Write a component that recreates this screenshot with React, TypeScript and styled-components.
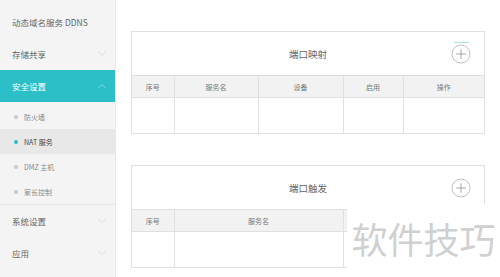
import styled, { createGlobalStyle } from 'styled-components'

const GlobalStyle = createGlobalStyle`
  html, body {
    margin: 0;
    padding: 0;
    background: #ffffff;
    font-family: "Noto Sans CJK SC", "Noto Sans", sans-serif;
  }
`

const Chevron = ({ up, light }: { up?: boolean; light?: boolean }) => (
  <ChevronSvg width="10" height="6" viewBox="0 0 10 6">
    <path
      d={up ? 'M1 5.5 L5 1.5 L9 5.5' : 'M1 0.5 L5 4.5 L9 0.5'}
      fill="none"
      stroke={light ? 'rgba(255,255,255,0.5)' : '#d4d4d4'}
      strokeWidth="0.8"
    />
  </ChevronSvg>
)

const PlusButton = ({ hint }: { hint?: boolean }) => (
  <PlusWrap>
    {hint && <Hint />}
    <svg width="20" height="20" viewBox="0 0 20 20">
      <circle cx="10" cy="10" r="9" fill="#fff" stroke="#b0b0b0" strokeWidth="0.8" />
      <path d="M10 5.2 V14.8 M5.2 10 H14.8" stroke="#909090" strokeWidth="0.8" />
    </svg>
  </PlusWrap>
)

const subItems = [
  { label: '防火墙' },
  { label: 'NAT 服务', active: true },
  { label: 'DMZ 主机' },
  { label: '家长控制' },
]

function App() {
  return (
    <>
      <GlobalStyle />
      <Page>
        <Sidebar>
          <MenuItem $first>
            <span>动态域名服务 DDNS</span>
          </MenuItem>
          <MenuItem>
            <span>存储共享</span>
            <Chevron />
          </MenuItem>
          <MenuItem $active>
            <span>安全设置</span>
            <Chevron up light />
          </MenuItem>
          <SubList>
            {subItems.map((s) => (
              <SubItem key={s.label} $active={s.active}>
                <Dot $active={s.active} />
                {s.label}
              </SubItem>
            ))}
          </SubList>
          <MenuItem>
            <span>系统设置</span>
            <Chevron />
          </MenuItem>
          <MenuItem>
            <span>应用</span>
            <Chevron />
          </MenuItem>
        </Sidebar>

        <Main>
          <Panel>
            <PanelHeader>
              <PanelTitle>端口映射</PanelTitle>
              <PlusButton hint />
            </PanelHeader>
            <Table>
              <colgroup>
                <col style={{ width: 42 }} />
                <col style={{ width: 84 }} />
                <col style={{ width: 85 }} />
                <col style={{ width: 60 }} />
                <col />
              </colgroup>
              <thead>
                <tr>
                  <Th>序号</Th>
                  <Th>服务名</Th>
                  <Th>设备</Th>
                  <Th>启用</Th>
                  <Th>操作</Th>
                </tr>
              </thead>
              <tbody>
                <tr>
                  <Td />
                  <Td />
                  <Td />
                  <Td />
                  <Td />
                </tr>
              </tbody>
            </Table>
          </Panel>

          <Panel>
            <PanelHeader>
              <PanelTitle>端口触发</PanelTitle>
              <PlusButton />
            </PanelHeader>
            <Table>
              <colgroup>
                <col style={{ width: 42 }} />
                <col style={{ width: 169 }} />
                <col style={{ width: 80 }} />
                <col />
              </colgroup>
              <thead>
                <tr>
                  <Th>序号</Th>
                  <Th>服务名</Th>
                  <Th />
                  <Th />
                </tr>
              </thead>
              <tbody>
                <tr>
                  <Td />
                  <Td />
                  <Td />
                  <Td />
                </tr>
              </tbody>
            </Table>
          </Panel>
        </Main>

        <Watermark>软件技巧</Watermark>
      </Page>
    </>
  )
}

export default App

const Page = styled.div`
  position: relative;
  display: flex;
  width: 500px;
  height: 277px;
  overflow: hidden;
`

const Sidebar = styled.nav`
  width: 116px;
  flex-shrink: 0;
  background: #f4f4f4;
  border-right: 1px solid #e8e8e8;
  box-sizing: border-box;
  display: flex;
  flex-direction: column;
`

const MenuItem = styled.div<{ $active?: boolean; $first?: boolean }>`
  height: 32px;
  margin-top: ${(p) => (p.$first ? '6px' : '0')};
  padding: 0 8px 0 12px;
  display: flex;
  align-items: center;
  justify-content: space-between;
  font-size: 8.5px;
  color: ${(p) => (p.$active ? '#ffffff' : '#666666')};
  background: ${(p) => (p.$active ? '#2dbfc8' : 'transparent')};
`

const ChevronSvg = styled.svg`
  display: block;
`

const SubList = styled.div`
  padding: 2px 0 0;
  border-bottom: 1px solid #e4e4e4;
`

const SubItem = styled.div<{ $active?: boolean }>`
  height: 25px;
  display: flex;
  align-items: center;
  padding-left: 14px;
  font-size: 7px;
  color: ${(p) => (p.$active ? '#444444' : '#888888')};
  background: ${(p) => (p.$active ? '#e8e8e8' : 'transparent')};
`

const Dot = styled.span<{ $active?: boolean }>`
  width: 4px;
  height: 4px;
  border-radius: 50%;
  margin-right: 6px;
  background: ${(p) => (p.$active ? '#2dbfc8' : '#c8c8c8')};
`

const Main = styled.main`
  flex: 1;
  padding: 31px 15px 0 15px;
  display: flex;
  flex-direction: column;
  gap: 31px;
`

const Panel = styled.section`
  border: 1px solid #e0e0e0;
  background: #ffffff;
`

const PanelHeader = styled.header`
  position: relative;
  height: 43px;
  display: flex;
  align-items: center;
  justify-content: center;
  border-bottom: 1px solid #e0e0e0;
`

const PanelTitle = styled.h2`
  margin: 0;
  font-size: 9.5px;
  font-weight: 400;
  color: #666666;
`

const PlusWrap = styled.div`
  position: absolute;
  right: 13px;
  top: 12px;
  width: 20px;
  height: 20px;
  svg {
    display: block;
  }
`

const Hint = styled.div`
  position: absolute;
  left: 3px;
  top: -2px;
  width: 15px;
  height: 1px;
  background: #a6e3e6;
`

const Table = styled.table`
  width: 100%;
  border-collapse: collapse;
  table-layout: fixed;
`

const Th = styled.th`
  height: 21px;
  padding: 0;
  background: #f2f2f2;
  font-size: 7px;
  font-weight: 400;
  color: #777777;
  border-left: 1px solid #e0e0e0;
  border-bottom: 1px solid #e0e0e0;
  &:first-child {
    border-left: none;
  }
`

const Td = styled.td`
  height: 35px;
  padding: 0;
  border-left: 1px solid #e0e0e0;
  &:first-child {
    border-left: none;
  }
`

const Watermark = styled.div`
  position: absolute;
  left: 347px;
  top: 204px;
  width: 153px;
  height: 73px;
  background: #ffffff;
  display: flex;
  align-items: center;
  justify-content: center;
  padding-bottom: 6px;
  box-sizing: border-box;
  font-size: 36px;
  color: #d0d0d0;
  font-family: "Noto Sans CJK SC", sans-serif;
`
